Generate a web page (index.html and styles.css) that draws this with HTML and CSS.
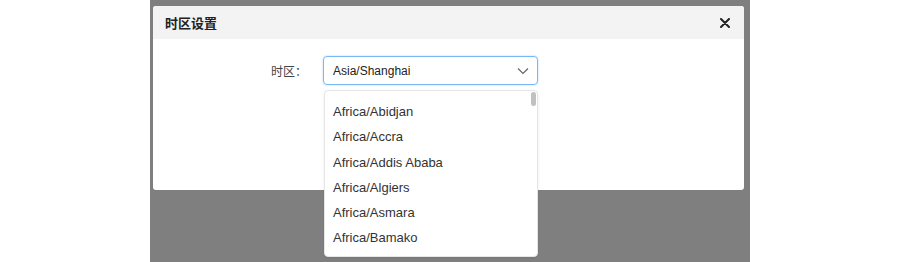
FILE: index.html
```html
<!DOCTYPE html>
<html lang="zh-CN">
<head>
    <meta charset="UTF-8">
    <meta name="viewport" content="width=device-width, initial-scale=1.0">
    <title>时区设置</title>
    <link rel="stylesheet" href="styles.css">
</head>
<body>
    <div class="page">
        <div class="mask">
            <div class="dialog">
                <div class="dialog-header">
                    <span class="dialog-title">时区设置</span>
                    <button class="close" aria-label="关闭">
                        <svg width="10" height="10" viewBox="0 0 10 10">
                            <path d="M1 1 L9 9 M9 1 L1 9" stroke="#222" stroke-width="2" stroke-linecap="round"/>
                        </svg>
                    </button>
                </div>
                <div class="dialog-body">
                    <div class="form-row">
                        <label class="form-label">时区：</label>
                        <div class="select-wrap">
                            <div class="select">
                                <span>Asia/Shanghai</span>
                                <svg class="arrow" width="12" height="8" viewBox="0 0 12 8">
                                    <path d="M1 1.5 L6 6.5 L11 1.5" fill="none" stroke="#666" stroke-width="1.2"/>
                                </svg>
                            </div>
                            <div class="dropdown">
                                <ul class="options">
                                    <li>Africa/Abidjan</li>
                                    <li>Africa/Accra</li>
                                    <li>Africa/Addis Ababa</li>
                                    <li>Africa/Algiers</li>
                                    <li>Africa/Asmara</li>
                                    <li>Africa/Bamako</li>
                                </ul>
                                <div class="thumb"></div>
                            </div>
                        </div>
                    </div>
                </div>
            </div>
        </div>
    </div>
</body>
</html>
```

FILE: styles.css
```css
body {
    margin: 0;
    padding: 0;
    background: #fff;
    font-family: "Liberation Sans", "Noto Sans CJK SC", sans-serif;
    color: #333;
}
.page {
    display: flex;
    height: 262px;
    padding-left: 150px;
    overflow: hidden;
}
.mask {
    width: 600px;
    height: 262px;
    background: #7f7f7f;
}
.dialog {
    position: relative;
    width: 591px;
    height: 184px;
    margin: 6px 0 0 3px;
    background: #fff;
    border-radius: 3px;
}
.dialog-header {
    display: flex;
    align-items: center;
    justify-content: space-between;
    height: 33px;
    padding: 0 12px;
    background: #f3f3f3;
    border-radius: 3px 3px 0 0;
}
.dialog-title {
    font-family: "Noto Sans CJK SC", sans-serif;
    font-size: 13px;
    font-weight: bold;
    color: #222;
}
.close {
    display: flex;
    padding: 0;
    margin-right: 2px;
    border: none;
    background: none;
}
.dialog-body {
    padding-top: 17px;
}
.form-row {
    display: flex;
    align-items: center;
}
.form-label {
    width: 154px;
    text-align: right;
    font-family: "Noto Sans CJK SC", sans-serif;
    font-size: 12px;
    color: #444;
    margin-right: 16px;
}
.select-wrap {
    position: relative;
}
.select {
    display: flex;
    align-items: center;
    justify-content: space-between;
    box-sizing: border-box;
    width: 215px;
    height: 29px;
    padding: 0 8px 0 9px;
    border: 1px solid #79b8f2;
    border-radius: 4px;
    box-shadow: 0 0 2px rgba(64, 150, 240, 0.45);
    font-size: 12px;
    color: #222;
}
.dropdown {
    position: absolute;
    top: 34px;
    left: 1px;
    box-sizing: border-box;
    width: 214px;
    height: 167px;
    background: #fff;
    border: 1px solid #e6e6e6;
    border-radius: 4px;
    box-shadow: 0 1px 3px rgba(0, 0, 0, 0.08);
}
.options {
    list-style: none;
    margin: 0;
    padding: 8px 0 0 8px;
}
.options li {
    height: 25.3px;
    line-height: 25.3px;
    font-size: 13px;
    color: #333;
}
.thumb {
    position: absolute;
    top: 1px;
    right: 1px;
    width: 5px;
    height: 14px;
    background: #c1c1c1;
    border-radius: 3px;
}
```
